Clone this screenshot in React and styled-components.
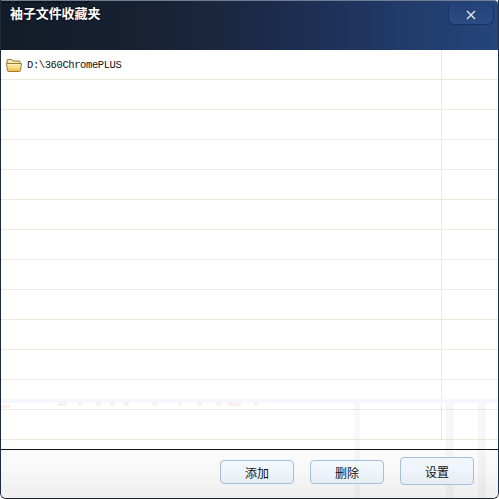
import React from 'react'
import styled, { createGlobalStyle } from 'styled-components'

const GlobalStyle = createGlobalStyle`
	html, body {
		margin: 0;
		padding: 0;
		background: #fff;
	}
`

const Window = styled.div`
	position: relative;
	box-sizing: border-box;
	width: 499px;
	height: 499px;
	display: flex;
	flex-direction: column;
	overflow: hidden;
	border-left: 1px solid #1c2a3e;
	border-right: 1px solid #1f2f4c;
	border-bottom: 1px solid #20242c;
	border-radius: 0 0 6px 6px;
	background: #fff;
	font-family: "Noto Sans CJK SC", "Liberation Sans", sans-serif;
`

const TitleBar = styled.div`
	position: relative;
	flex: none;
	height: 50px;
	box-sizing: border-box;
	padding: 5px 0 0 9px;
	display: flex;
	justify-content: space-between;
	align-items: flex-start;
	overflow: hidden;
	border-top: 1px solid #6f7d94;
	border-radius: 0 4px 0 0;
	background: linear-gradient(90deg, #131b28 0%, #182233 30%, #1b2b4a 55%, #213a6a 80%, #25467b 100%);
`

const GhostTitle = styled.div`
	position: absolute;
	left: 0;
	top: -6px;
	font-family: "Liberation Mono", monospace;
	font-size: 11px;
	line-height: 10px;
	letter-spacing: -0.3px;
	color: #050608;
	pointer-events: none;
`

const Title = styled.div`
	position: relative;
	color: #fff;
	font-size: 13px;
	font-weight: 700;
	line-height: 14px;
	letter-spacing: -0.1px;
	text-shadow: 0 0 2px #000;
`

const CloseButton = styled.div`
	width: 46px;
	height: 20px;
	margin: -1px 4px 0 0;
	display: flex;
	align-items: center;
	justify-content: center;
	box-sizing: border-box;
	border: 1px solid #1c3361;
	border-top: none;
	border-radius: 0 0 6px 6px;
	background: linear-gradient(180deg, #25427a, #2b4b83);
`

const List = styled.div`
	flex: 1;
	min-height: 0;
	display: flex;
	flex-direction: column;
	overflow: hidden;
	background: #fff;
`

const Row = styled.div`
	flex: none;
	height: 30px;
	box-sizing: border-box;
	display: grid;
	grid-template-columns: 440px 1fr;
	border-bottom: 1px solid #eceadd;
`

const NameCell = styled.div`
	display: flex;
	align-items: center;
	gap: 5px;
	padding-left: 5px;
	border-right: 1px solid #eceadd;
	margin-right: -1px;
`

const Path = styled.span`
	font-family: "Liberation Mono", "DejaVu Sans Mono", monospace;
	font-size: 10.5px;
	letter-spacing: -0.4px;
	color: #111;
`

const Footer = styled.div`
	flex: none;
	height: 49px;
	box-sizing: border-box;
	display: flex;
	justify-content: flex-end;
	align-items: flex-start;
	gap: 16px;
	padding: 7px 24px 0 0;
	border-top: 1px solid #111;
	background: linear-gradient(180deg, #fcfcfc 0%, #f7f7f7 45%, #eeeeee 100%);
`

const Button = styled.div`
	position: relative;
	z-index: 1;
	width: 74px;
	height: ${props => props.$tall ? '28px' : '24px'};
	margin-top: ${props => props.$tall ? '0' : '3px'};
	box-sizing: border-box;
	display: flex;
	align-items: center;
	justify-content: center;
	border: 1px solid #a6bfdc;
	border-radius: 4px;
	background: linear-gradient(180deg, #f3f8fe 0%, #eef4fb 50%, #e8edf3 100%);
	font-size: 12px;
	color: #111;
`

const GhostBand = styled.div`
	position: absolute;
	left: 0;
	right: 0;
	top: 399px;
	height: 4px;
	background: #f5f7fc;
	pointer-events: none;
`

const GhostStrip = styled.div`
	position: absolute;
	top: 403px;
	bottom: 0;
	left: ${props => props.$left}px;
	width: ${props => props.$width}px;
	background: rgba(120, 125, 125, ${props => props.$alpha});
	pointer-events: none;
`

const GhostMark = styled.div`
	position: absolute;
	top: ${props => props.$top}px;
	left: ${props => props.$left}px;
	width: ${props => props.$width}px;
	height: 3px;
	background: #fbeeee;
	pointer-events: none;
`

const FolderIcon = () => (
	<svg width="16" height="14" viewBox="0 0 16 14">
		<defs>
			<linearGradient id="folderFront" x1="0" y1="0" x2="0" y2="1">
				<stop offset="0" stopColor="#fdf3c4" />
				<stop offset="0.5" stopColor="#f8dc84" />
				<stop offset="1" stopColor="#e9b640" />
			</linearGradient>
		</defs>
		<path d="M1 4 L1.5 1.5 L5.5 1.5 L7 3 L13.5 3 L14 4.5 L14 6 L1 6 Z" fill="#f6e7b4" stroke="#94782f" />
		<path d="M.5 5.5 L15.5 5.5 L14.5 12.5 Q14.4 13.5 13.5 13.5 L2.5 13.5 Q1.6 13.5 1.5 12.5 Z" fill="url(#folderFront)" stroke="#a07c28" />
	</svg>
)

const CloseIcon = () => (
	<svg width="10" height="10" viewBox="0 0 10 10">
		<path d="M1 1 L9 9 M9 1 L1 9" stroke="#e3e8ef" strokeWidth="1.4" />
	</svg>
)

const rows = Array.from({ length: 13 }, (_, i) => i)

const marks = [
	[57, 9], [77, 5], [95, 5], [109, 5], [123, 5], [151, 5],
	[178, 3], [196, 5], [215, 5], [227, 13], [253, 5]
]

const App = () => (
	<>
		<GlobalStyle />
		<Window>
			<TitleBar>
				<GhostTitle>oriteSetup.exe</GhostTitle>
				<Title>袖子文件收藏夹</Title>
				<CloseButton>
					<CloseIcon />
				</CloseButton>
			</TitleBar>
			<List>
				{ rows.map(i =>
					<Row key={i}>
						<NameCell>
							{ i === 0 && <FolderIcon /> }
							{ i === 0 && <Path>D:\360ChromePLUS</Path> }
						</NameCell>
						<div />
					</Row>
				)}
			</List>
			<Footer>
				<Button>添加</Button>
				<Button>删除</Button>
				<Button $tall>设置</Button>
			</Footer>
			<GhostBand />
			{ marks.map(([left, width]) =>
				<GhostMark key={left} $top={403} $left={left} $width={width} />
			)}
			<GhostMark $top={405} $left={0} $width={9} />
			<GhostStrip $left={353} $width={6} $alpha={0.05} />
			<GhostStrip $left={445} $width={8} $alpha={0.06} />
			<GhostStrip $left={477} $width={8} $alpha={0.06} />
		</Window>
	</>
)

export default App
